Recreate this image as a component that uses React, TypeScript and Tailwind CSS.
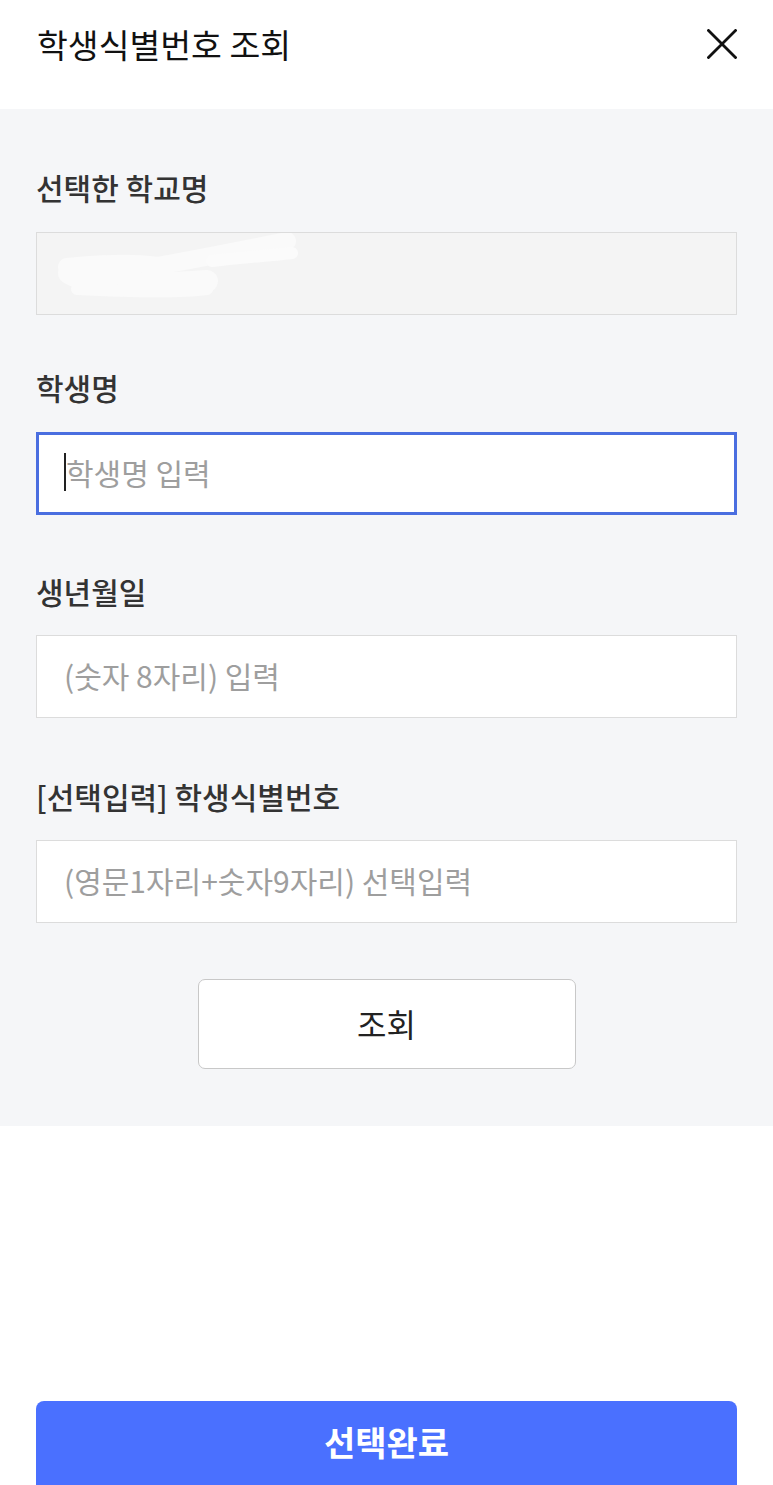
import React from "react";

const font = { fontFamily: '"Noto Sans CJK KR", "Noto Sans", sans-serif' };

function Label({ children, className = "" }: { children: React.ReactNode; className?: string }) {
  return (
    <div className={`text-[30px] leading-[40px] font-medium text-[#333333] ${className}`}>{children}</div>
  );
}

function Field({ placeholder, className = "" }: { placeholder: string; className?: string }) {
  return (
    <div className={`h-[83px] bg-white border border-[#dcdcdc] flex items-center pl-[27px] pb-[4px] ${className}`}>
      <span className="text-[30px] text-[#9e9e9e] leading-none">{placeholder}</span>
    </div>
  );
}

export default function App() {
  return (
    <div className="w-[773px] h-[1485px] bg-white flex flex-col overflow-hidden" style={font}>
      <header className="h-[109px] flex items-start justify-between pl-[37px] pr-[36px] pt-[21px] shrink-0">
        <h1 className="text-[33.5px] leading-[46px] font-normal text-[#111111]">학생식별번호 조회</h1>
        <button className="mt-[8px] w-[30px] h-[30px] flex items-center justify-center" aria-label="닫기">
          <svg width="30" height="30" viewBox="0 0 30 30" fill="none">
            <path d="M1.5 1.5 L28.5 28.5 M28.5 1.5 L1.5 28.5" stroke="#111" strokeWidth="2.8" strokeLinecap="square" />
          </svg>
        </button>
      </header>

      <section className="bg-[#f5f6f8] px-[36px] pt-[58px] pb-[57px] flex flex-col shrink-0">
        <Label>선택한 학교명</Label>
        <div className="mt-[25px] h-[83px] bg-[#f4f4f4] border border-[#dcdcdc] relative overflow-hidden">
          <svg className="absolute left-0 top-0" width="300" height="81" viewBox="0 0 300 81" fill="none">
            <path d="M30 34 C60 30 100 30 120 33 C150 28 200 18 250 8" stroke="#fafafa" strokeWidth="18" strokeLinecap="round" />
            <path d="M32 40 C50 52 120 52 170 48" stroke="#fafafa" strokeWidth="22" strokeLinecap="round" />
            <path d="M175 28 C210 24 240 22 255 20" stroke="#fbfbfb" strokeWidth="12" strokeLinecap="round" />
            <path d="M40 56 C80 58 140 60 170 56" stroke="#fafafa" strokeWidth="12" strokeLinecap="round" />
          </svg>
        </div>

        <Label className="mt-[52px]">학생명</Label>
        <div className="mt-[25px] h-[83px] bg-white border-[3px] border-[#4a6ee0] flex items-center pl-[25px] pb-[4px]">
          <span className="w-[2px] h-[38px] bg-[#222]" />
          <span className="text-[30px] text-[#9e9e9e] leading-none">학생명 입력</span>
        </div>

        <Label className="mt-[56px]">생년월일</Label>
        <Field className="mt-[24px]" placeholder="(숫자 8자리) 입력" />

        <Label className="mt-[58px]">[선택입력] 학생식별번호</Label>
        <Field className="mt-[24px]" placeholder="(영문1자리+숫자9자리) 선택입력" />

        <div className="mt-[56px] flex justify-center">
          <button className="w-[378px] h-[90px] bg-white border border-[#c8c8c8] rounded-[7px] text-[32px] text-[#222] flex items-center justify-center pb-[2px]">
            조회
          </button>
        </div>
      </section>

      <div className="flex-1" />

      <div className="px-[36px] shrink-0">
        <button className="w-full h-[84px] bg-[#4a70ff] rounded-t-[8px] text-white text-[34px] font-bold flex items-center justify-center pb-[4px]">
          선택완료
        </button>
      </div>
    </div>
  );
}
